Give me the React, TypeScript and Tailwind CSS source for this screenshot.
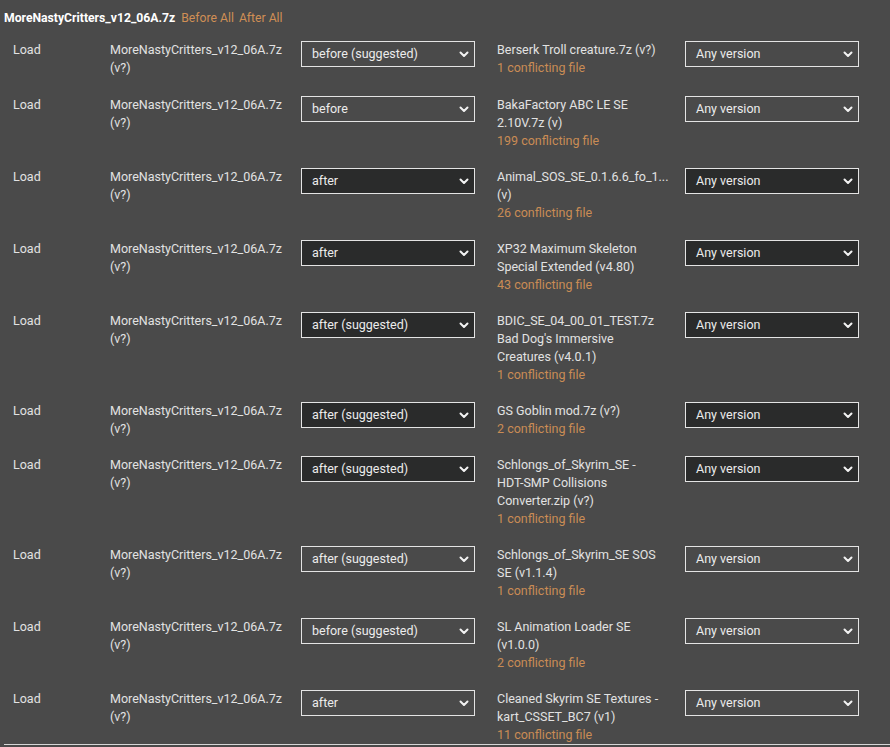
import React from 'react';

interface Rule {
  order: string;
  name: string;
  conflicts: number;
  dark: boolean;
}

const MOD = 'MoreNastyCritters_v12_06A.7z';

const RULES: Rule[] = [
  { order: 'before (suggested)', name: 'Berserk Troll creature.7z (v?)', conflicts: 1, dark: false },
  { order: 'before', name: 'BakaFactory ABC LE SE 2.10V.7z (v)', conflicts: 199, dark: false },
  { order: 'after', name: 'Animal_SOS_SE_0.1.6.6_fo_1... (v)', conflicts: 26, dark: true },
  { order: 'after', name: 'XP32 Maximum Skeleton Special Extended (v4.80)', conflicts: 43, dark: true },
  { order: 'after (suggested)', name: "BDIC_SE_04_00_01_TEST.7z Bad Dog's Immersive Creatures (v4.0.1)", conflicts: 1, dark: true },
  { order: 'after (suggested)', name: 'GS Goblin mod.7z (v?)', conflicts: 2, dark: true },
  { order: 'after (suggested)', name: 'Schlongs_of_Skyrim_SE - HDT-SMP Collisions Converter.zip (v?)', conflicts: 1, dark: true },
  { order: 'after (suggested)', name: 'Schlongs_of_Skyrim_SE SOS SE (v1.1.4)', conflicts: 1, dark: false },
  { order: 'before (suggested)', name: 'SL Animation Loader SE (v1.0.0)', conflicts: 2, dark: false },
  { order: 'after', name: 'Cleaned Skyrim SE Textures - kart_CSSET_BC7 (v1)', conflicts: 11, dark: false },
];

const Chevron = () => (
  <svg width="10" height="7" viewBox="0 0 10 7" className="shrink-0">
    <path d="M1.5 1.5 L5 5 L8.5 1.5" fill="none" stroke="#f2f2f2" strokeWidth="2" strokeLinecap="round" strokeLinejoin="round" />
  </svg>
);

const FakeSelect = ({ value, dark }: { value: string; dark: boolean }) => (
  <div
    className={`flex h-[26px] w-[174px] items-center justify-between border border-[#e4e4e4] pl-[10px] pr-[5px] text-[12.5px] text-[#ececec] ${dark ? 'bg-[#2a2b2b]' : 'bg-transparent'}`}
  >
    <span>{value}</span>
    <Chevron />
  </div>
);

export default function App() {
  return (
    <div className="h-[747px] w-[890px] overflow-hidden bg-[#4a4a4a] pl-[4px] font-['Roboto','Liberation_Sans',sans-serif]">
      <div className="pt-[10px] pb-[1px] text-[12.2px] leading-[16px]">
        <span className="font-bold text-white">{MOD}</span>
        <span className="ml-[6px] text-[#d08f55]">Before All</span>
        <span className="ml-[5px] text-[#d08f55]">After All</span>
      </div>

      <div>
        {RULES.map((r, i) => (
          <div
            key={i}
            className={`grid grid-cols-[106px_191px_196px_188px_1fr] items-start text-[12.5px] leading-[18px] text-[#e2e2e2] ${i === 0 ? 'pt-[14px]' : i === 1 ? 'pt-[19px]' : 'pt-[18px]'}`}
          >
            <div className="pl-[9px]">Load</div>
            <div className="pr-[13px]">{MOD} (v?)</div>
            <div><FakeSelect value={r.order} dark={r.dark} /></div>
            <div className="pr-[24px]">
              <div>{r.name}</div>
              <div className="text-[#c98c55]">{r.conflicts} conflicting file</div>
            </div>
            <div><FakeSelect value="Any version" dark={r.dark} /></div>
          </div>
        ))}
      </div>

      <div className="h-px bg-[#d6d6d6]" />
    </div>
  );
}
